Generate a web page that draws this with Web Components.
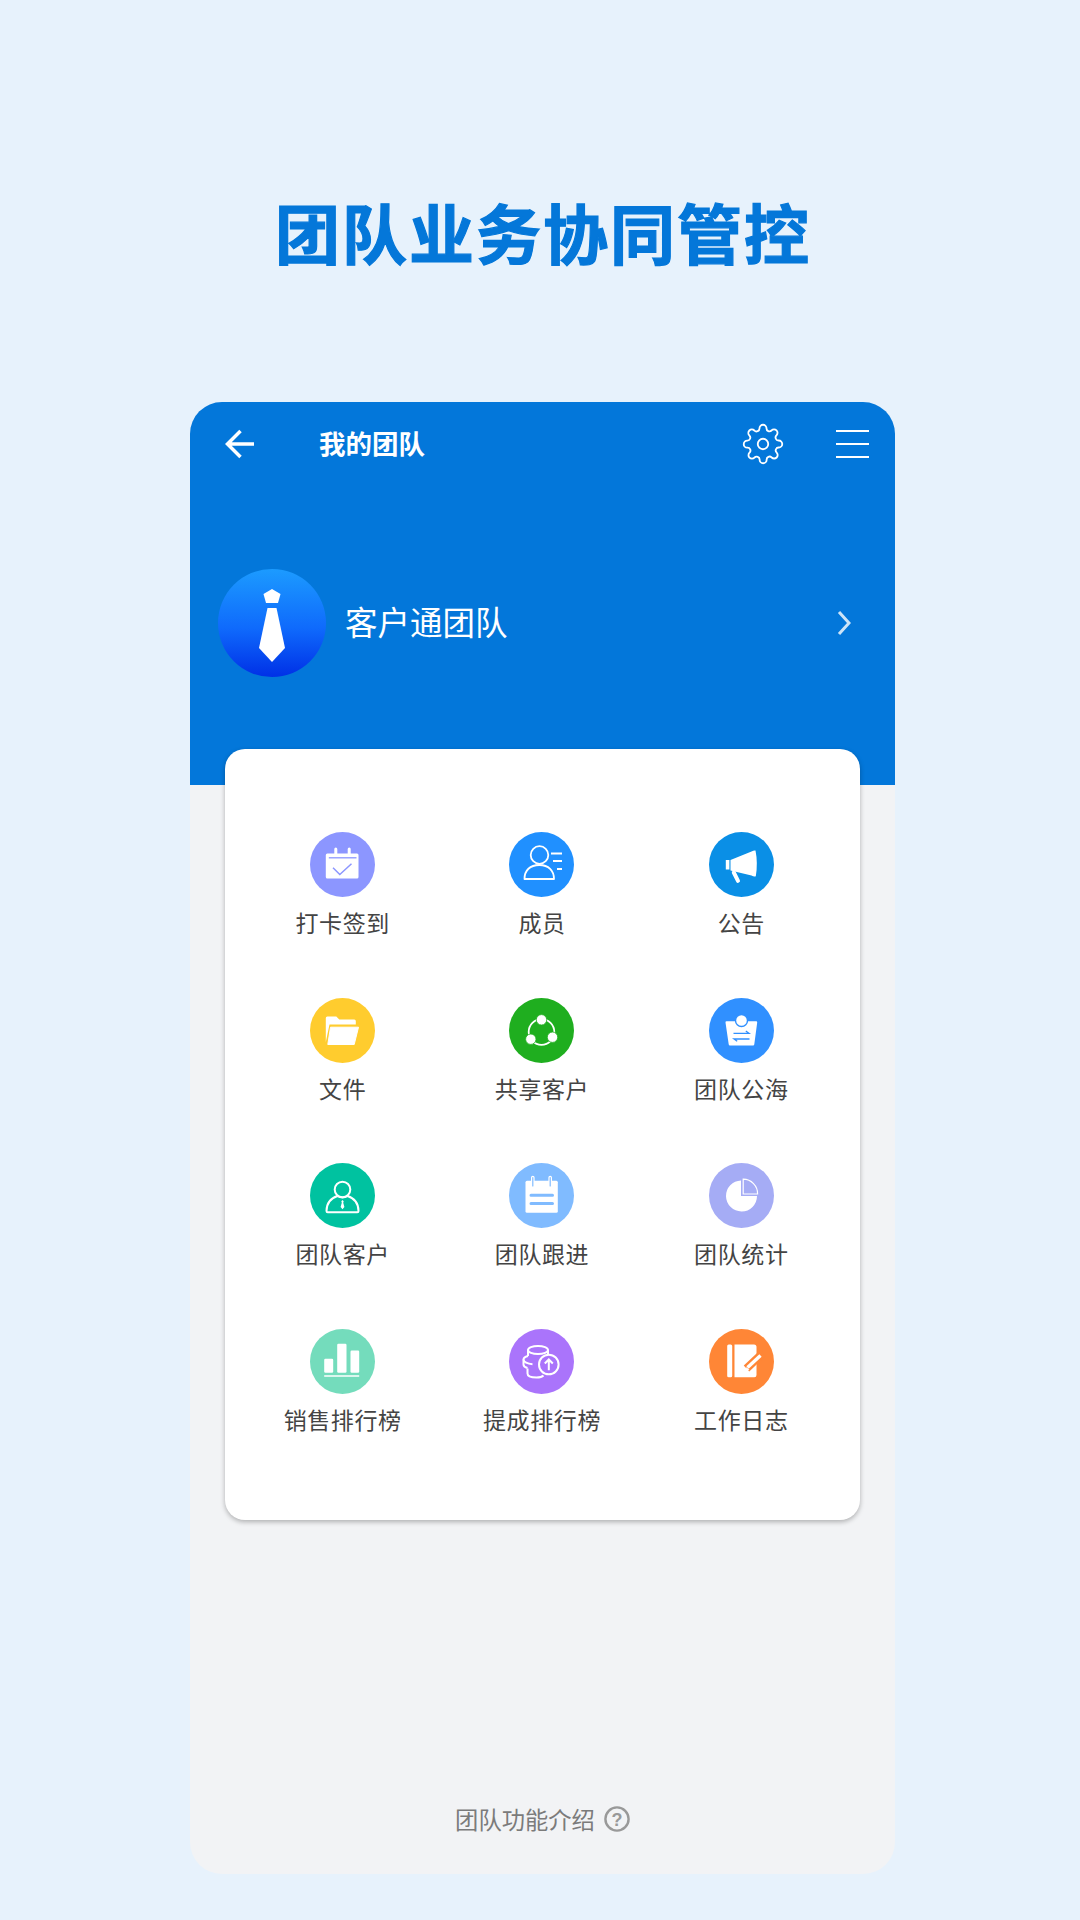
<!doctype html>
<html lang="zh">
<head>
<meta charset="utf-8">
<title>团队业务协同管控</title>
<style>
  html,body{margin:0;padding:0}
  body{background:#e7f2fc;font-family:"Noto Sans CJK SC","Noto Sans",sans-serif}
</style>
</head>
<body>
<promo-page>
  <span slot="title">团队业务协同管控</span>
  <phone-frame>
    <top-bar slot="head">我的团队</top-bar>
    <team-banner slot="head">客户通团队</team-banner>
    <feature-card>
      <feature-item icon="checkin" color="#8c96ff">打卡签到</feature-item>
      <feature-item icon="members" color="#2090ff">成员</feature-item>
      <feature-item icon="notice" color="#0a8fe6">公告</feature-item>
      <feature-item icon="folder" color="#ffcc2e">文件</feature-item>
      <feature-item icon="share" color="#1fae1f">共享客户</feature-item>
      <feature-item icon="sea" color="#3090ff">团队公海</feature-item>
      <feature-item icon="customer" color="#00c2a0">团队客户</feature-item>
      <feature-item icon="follow" color="#80bbff">团队跟进</feature-item>
      <feature-item icon="stats" color="#a5acf5">团队统计</feature-item>
      <feature-item icon="sales" color="#74dcbc">销售排行榜</feature-item>
      <feature-item icon="bonus" color="#aa74fb">提成排行榜</feature-item>
      <feature-item icon="log" color="#ff8636">工作日志</feature-item>
    </feature-card>
    <help-link slot="foot">团队功能介绍</help-link>
  </phone-frame>
</promo-page>

<script>
const ICONS = {
  checkin: `<rect x="15.800" y="21.500" width="32.700" height="25" rx="1.500" fill="#fff"/>
    <path d="M25.800 17v6M39.200 17v6" stroke="#fff" stroke-width="3" stroke-linecap="round"/>
    <path d="M18.800 25.800h27.700" stroke="var(--c)" stroke-width="1.300"/>
    <path d="M23 35.800l6.800 6.700 11.700-10.700" fill="none" stroke="var(--c)" stroke-width="1.500"/>`,
  members: `<circle cx="30.500" cy="23" r="8.800" fill="none" stroke="#fff" stroke-width="1.800"/>
    <path d="M15.500 47c0-8.600 5.500-14 14.800-14s14.700 5.400 14.700 14z" fill="none" stroke="#fff" stroke-width="1.800" stroke-linejoin="round"/>
    <path d="M42 21.500h11M44 29h9M48 37h5" stroke="#fff" stroke-width="1.800"/>`,
  notice: `<path d="M21.500 28L42.500 19.500Q45 18 46.500 18.500Q49 31 46.800 44.200Q45 45 42.500 43.500L21.500 38.500z" fill="#fff"/>
    <rect x="16.800" y="28" width="3.600" height="9.500" fill="#fff"/>
    <path d="M24.800 40.500l4.200 8.300" stroke="#fff" stroke-width="4" stroke-linecap="round"/>`,
  folder: `<path d="M15.800 20q0-1.500 1.500-1.500h9l3 3h15q1.500 0 1.500 1.500v3.600H19.500L15.800 44z" fill="#fff"/>
    <path d="M20.500 29.200h28L44.200 46.500H17.800z" fill="#fff" stroke="#fff" stroke-linejoin="round"/>`,
  share: `<circle cx="32.500" cy="34" r="12.800" fill="none" stroke="#fff" stroke-width="1.800"/>
    <circle cx="32.500" cy="21.800" r="5.200" fill="#fff" stroke="var(--c)" stroke-width=".8"/>
    <circle cx="21.800" cy="41.200" r="5.200" fill="#fff" stroke="var(--c)" stroke-width=".8"/>
    <circle cx="43.500" cy="39.200" r="5.200" fill="#fff" stroke="var(--c)" stroke-width=".8"/>`,
  sea: `<path d="M17.500 23.200H47.200Q48.300 23.200 48.200 24.500L45.300 46.300Q45.200 47.500 44 47.500H21Q19.800 47.500 19.700 46.300L16.500 24.500Q16.400 23.200 17.500 23.200z" fill="#fff"/>
    <circle cx="32.500" cy="22.500" r="6" fill="#fff" stroke="var(--c)" stroke-width="1.400"/>
    <path d="M24.500 35.300H40L36.800 33M40.500 41H25L28.200 43.300" fill="none" stroke="var(--c)" stroke-width="1.300"/>`,
  customer: `<circle cx="32.500" cy="26.500" r="7.800" fill="none" stroke="#fff" stroke-width="2"/>
    <path d="M16.500 48c0-8 5-13 11-15q5 3 10 0c6 2 11 7 11 15q0 1.200-1.200 1.200H17.700q-1.200 0-1.200-1.200z" fill="none" stroke="#fff" stroke-width="2" stroke-linejoin="round"/>
    <path d="M32.500 37l1.200 1.200-.5 1.500 1.200 4.300-1.900 2.300-1.900-2.300 1.200-4.300-.5-1.500z" fill="#fff"/>`,
  follow: `<rect x="16.500" y="17.800" width="32.300" height="32" rx="1.500" fill="#fff"/>
    <path d="M23.800 14.500v8.500M41.200 14.500v8.500" stroke="#fff" stroke-width="3.600" stroke-linecap="round" fill="none"/>
    <path d="M23.800 14.500v8.500M41.200 14.500v8.500" stroke="var(--c)" stroke-width="1.200" stroke-linecap="round" fill="none"/>
    <path d="M22 32.200h21.500M22 40.500h21.500" stroke="var(--c)" stroke-width="3" stroke-linecap="round"/>`,
  stats: `<path d="M32 17.500V33H48A15.500 15.500 0 1 1 32 17.500z" fill="#fff"/>
    <path d="M34.200 16.200V31H48.600A14.500 14.500 0 0 0 34.200 16.200z" fill="none" stroke="#fff" stroke-width="1.200"/>`,
  sales: `<rect x="14.200" y="29.800" width="9" height="14" rx="1.200" fill="#fff"/>
    <rect x="27.200" y="14.800" width="9.300" height="29" rx="1.200" fill="#fff"/>
    <rect x="40.500" y="21.500" width="8.700" height="22.300" rx="1.200" fill="#fff"/>
    <path d="M14.200 47h35" stroke="#fff" stroke-width="1.600"/>`,
  bonus: `<g fill="none" stroke="#fff" stroke-width="2">
      <ellipse cx="29" cy="21" rx="10" ry="4"/>
      <path d="M19 21v6M39 21v5"/>
      <path d="M19 27c-3 .8-4.500 2-4.500 3.500 0 2.500 4 4.500 9 4.700"/>
      <path d="M14.500 30.500v5c0 1.500 1.500 2.800 4 3.500"/>
      <path d="M18.500 39.500v5c0 2.500 4 4 9 4 3 0 5.500-.5 7-2"/>
      <circle cx="39.800" cy="35.500" r="9.800"/>
    </g>
    <path d="M39.800 41.200v-11M35.800 34.500l4-4 4 4" fill="none" stroke="#fff" stroke-width="2"/>`,
  log: `<rect x="18.200" y="15.500" width="5" height="32.700" rx="1.500" fill="#fff"/>
    <path d="M25.500 15.500H45q2.500 0 2.500 2.500v28q0 2.200-2.200 2.200H25.500z" fill="#fff"/>
    <path d="M54 24L37.500 39.500" stroke="var(--c)" stroke-width="8"/>
    <path d="M51.500 26.500L38.500 38.500" stroke="#fff" stroke-width="3.400"/>
    <path d="M36.500 42l1-4 3 3z" fill="#fff"/>`
};

class PromoPage extends HTMLElement {
  constructor() {
    super();
    this.attachShadow({ mode: 'open' }).innerHTML = `
      <style>
        :host{display:flex;flex-direction:column;width:1080px;height:1920px;box-sizing:border-box;padding-left:190px;background:#e7f2fc}
        h1{
          margin:0 0 0 85px;padding-top:187px;height:402px;box-sizing:border-box;
          font:700 65px/88px "Noto Sans CJK SC",sans-serif;
          -webkit-text-stroke:1.200px #0477d9;
          letter-spacing:2px;color:#0477d9;white-space:nowrap;
        }
      </style>
      <h1><slot name="title"></slot></h1>
      <slot></slot>
    `;
  }
}

class PhoneFrame extends HTMLElement {
  constructor() {
    super();
    this.attachShadow({ mode: 'open' }).innerHTML = `
      <style>
        :host{display:flex;flex-direction:column;width:705px;height:1472px;border-radius:32px;overflow:hidden;background:#f2f3f5}
        .head{height:383px;background:#0377da;display:flex;flex-direction:column;flex:none}
        .body{flex:1;display:flex;flex-direction:column;padding:0 35px;margin-top:-36px}
        .foot{display:flex;justify-content:center;padding-bottom:39px}
      </style>
      <div class="head"><slot name="head"></slot></div>
      <div class="body"><slot></slot></div>
      <div class="foot"><slot name="foot"></slot></div>
    `;
  }
}

class TopBar extends HTMLElement {
  constructor() {
    super();
    this.attachShadow({ mode: 'open' }).innerHTML = `
      <style>
        :host{display:flex;align-items:center;height:84px;padding:0 26px 0 35px;color:#fff;flex:none}
        .back{width:30px;height:30px;flex:none}
        .name{margin:0 0 2px 64px;font:700 26.500px/36px "Noto Sans CJK SC",sans-serif;flex:1;white-space:nowrap}
        .gear{width:42px;height:42px;flex:none;margin-right:52px}
        .menu{width:33px;height:28px;flex:none;display:flex;flex-direction:column;justify-content:space-between}
        .menu i{display:block;height:2px;background:#fff}
        svg{display:block}
      </style>
      <svg class="back" viewBox="0 0 30 30" fill="none" stroke="#fff" stroke-width="3.500">
        <path d="M29 15H3M15.500 2L2.500 15l13 13"/>
      </svg>
      <div class="name"><slot></slot></div>
      <svg class="gear" viewBox="0 0 24 24" fill="none" stroke="#fff" stroke-width="1.050" stroke-linejoin="round">
        <circle cx="12" cy="12" r="3"/>
        <path d="M19.400 15a1.650 1.650 0 0 0 .33 1.820l.06.06a2 2 0 1 1-2.830 2.830l-.06-.06a1.650 1.650 0 0 0-1.820-.33 1.650 1.650 0 0 0-1 1.510V21a2 2 0 0 1-4 0v-.09A1.650 1.650 0 0 0 9 19.400a1.650 1.650 0 0 0-1.820.33l-.06.06a2 2 0 1 1-2.830-2.830l.06-.06a1.650 1.650 0 0 0 .33-1.820 1.650 1.650 0 0 0-1.510-1H3a2 2 0 0 1 0-4h.09A1.650 1.650 0 0 0 4.600 9a1.650 1.650 0 0 0-.33-1.820l-.06-.06a2 2 0 1 1 2.830-2.830l.06.06a1.650 1.650 0 0 0 1.820.33H9a1.650 1.650 0 0 0 1-1.510V3a2 2 0 0 1 4 0v.09a1.650 1.650 0 0 0 1 1.510 1.650 1.650 0 0 0 1.820-.33l.06-.06a2 2 0 1 1 2.830 2.830l-.06.06a1.650 1.650 0 0 0-.33 1.820V9a1.650 1.650 0 0 0 1.510 1H21a2 2 0 0 1 0 4h-.09a1.650 1.650 0 0 0-1.510 1z"/>
      </svg>
      <div class="menu"><i></i><i></i><i></i></div>
    `;
  }
}

class TeamBanner extends HTMLElement {
  constructor() {
    super();
    this.attachShadow({ mode: 'open' }).innerHTML = `
      <style>
        :host{display:flex;align-items:center;margin-top:83px;padding:0 44px 0 28px;color:#fff;flex:none}
        .avatar{width:108px;height:108px;flex:none;display:block}
        .name{margin:0 0 5px 19px;font:400 32.500px/44px "Noto Sans CJK SC",sans-serif;flex:1;white-space:nowrap}
        .arrow{width:14px;height:26px;flex:none;display:block}
      </style>
      <svg class="avatar" viewBox="0 0 108 108">
        <defs>
          <linearGradient id="g" x1="0" y1="0" x2="0" y2="1">
            <stop offset="0" stop-color="#1c9bff"/>
            <stop offset=".55" stop-color="#0f6afc"/>
            <stop offset="1" stop-color="#0030e6"/>
          </linearGradient>
        </defs>
        <circle cx="54" cy="54" r="54" fill="url(#g)"/>
        <path d="M54 20l8.500 5-2.500 9H48l-2.500-9z" fill="#fff"/>
        <path d="M49.500 39h9L67 79 54 93 41 79z" fill="#fff"/>
      </svg>
      <div class="name"><slot></slot></div>
      <svg class="arrow" viewBox="0 0 14 26" fill="none" stroke="#fff" stroke-opacity=".8" stroke-width="3">
        <path d="M2 2L12 13 2 24"/>
      </svg>
    `;
  }
}

class FeatureCard extends HTMLElement {
  constructor() {
    super();
    this.attachShadow({ mode: 'open' }).innerHTML = `
      <style>
        :host{display:block;position:relative;height:771px;box-sizing:border-box;padding:83px 19px 0 18px;background:#fff;border-radius:20px;box-shadow:0 2px 5px rgba(0,0,0,.28)}
        .grid{display:grid;grid-template-columns:repeat(3,1fr);grid-auto-rows:165.700px}
      </style>
      <div class="grid"><slot></slot></div>
    `;
  }
}

class FeatureItem extends HTMLElement {
  constructor() {
    super();
    const color = this.getAttribute('color');
    const icon = ICONS[this.getAttribute('icon')] || '';
    this.attachShadow({ mode: 'open' }).innerHTML = `
      <style>
        :host{display:flex;flex-direction:column;align-items:center;--c:${color}}
        svg{width:65px;height:65px;display:block;flex:none}
        .label{margin-top:10px;font:400 23px/30px "Noto Sans CJK SC",sans-serif;letter-spacing:.6px;color:#444;white-space:nowrap}
      </style>
      <svg viewBox="0 0 65 65"><circle cx="32.500" cy="32.500" r="32.500" fill="var(--c)"/>${icon}</svg>
      <div class="label"><slot></slot></div>
    `;
  }
}

class HelpLink extends HTMLElement {
  constructor() {
    super();
    this.attachShadow({ mode: 'open' }).innerHTML = `
      <style>
        :host{display:flex;align-items:center;gap:9px;color:#7b7b7b;font:400 23.300px/32px "Noto Sans CJK SC",sans-serif;white-space:nowrap}
        svg{width:26px;height:26px;display:block}
        text{font:700 18px "Liberation Sans",sans-serif;fill:#999}
      </style>
      <span><slot></slot></span>
      <svg viewBox="0 0 26 26">
        <circle cx="13" cy="13" r="11.600" fill="none" stroke="#999" stroke-width="2.400"/>
        <text x="13" y="19.500" text-anchor="middle">?</text>
      </svg>
    `;
  }
}

customElements.define('promo-page', PromoPage);
customElements.define('phone-frame', PhoneFrame);
customElements.define('top-bar', TopBar);
customElements.define('team-banner', TeamBanner);
customElements.define('feature-card', FeatureCard);
customElements.define('feature-item', FeatureItem);
customElements.define('help-link', HelpLink);
</script>
</body>
</html>
